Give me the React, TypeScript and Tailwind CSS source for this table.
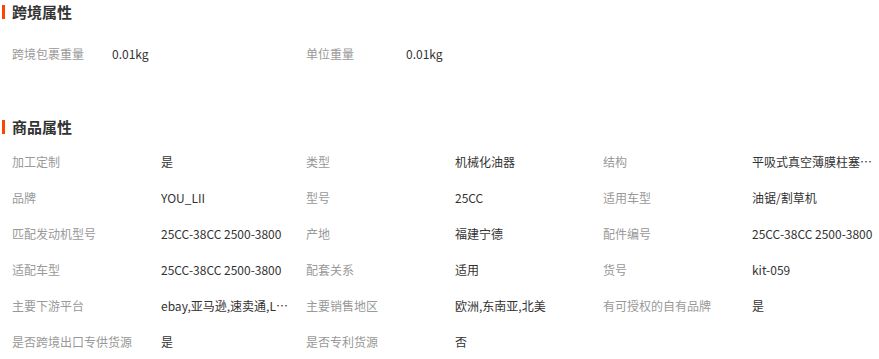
import React from "react";

type Item = { label: string; value: string };

const font = { fontFamily: '"Noto Sans CJK SC", "Noto Sans", sans-serif' };

function Header({ title }: { title: string }) {
  return (
    <div className="flex h-6 items-center">
      <div className="ml-[2px] h-[14px] w-[3px] bg-[#ff4400]" />
      <div className="ml-[7px] text-[15px] font-bold leading-6 text-[#333]">{title}</div>
    </div>
  );
}

function Cell({ item, labelW }: { item?: Item; labelW: string }) {
  if (!item) return <div />;
  return (
    <div className="flex h-9 items-center text-[12px] leading-4">
      <div className={`${labelW} shrink-0 truncate text-[#999]`}>{item.label}</div>
      <div className="w-[128px] truncate text-[#333]">{item.value}</div>
    </div>
  );
}

const cross: Item[] = [
  { label: "跨境包裹重量", value: "0.01kg" },
  { label: "单位重量", value: "0.01kg" },
];

const goods: Item[] = [
  { label: "加工定制", value: "是" },
  { label: "类型", value: "机械化油器" },
  { label: "结构", value: "平吸式真空薄膜柱塞式化油器" },
  { label: "品牌", value: "YOU_LII" },
  { label: "型号", value: "25CC" },
  { label: "适用车型", value: "油锯/割草机" },
  { label: "匹配发动机型号", value: "25CC-38CC 2500-3800" },
  { label: "产地", value: "福建宁德" },
  { label: "配件编号", value: "25CC-38CC 2500-3800" },
  { label: "适配车型", value: "25CC-38CC 2500-3800" },
  { label: "配套关系", value: "适用" },
  { label: "货号", value: "kit-059" },
  { label: "主要下游平台", value: "ebay,亚马逊,速卖通,Lazada,Shopee" },
  { label: "主要销售地区", value: "欧洲,东南亚,北美" },
  { label: "有可授权的自有品牌", value: "是" },
  { label: "是否跨境出口专供货源", value: "是" },
  { label: "是否专利货源", value: "否" },
];

export default function App() {
  return (
    <div className="h-[359px] w-[879px] overflow-hidden bg-white" style={font}>
      <Header title="跨境属性" />
      <div className="mt-[12px] grid grid-cols-[294px_297px_1fr] pl-3">
        {cross.map((it) => (
          <Cell key={it.label} item={it} labelW="w-[100px]" />
        ))}
      </div>
      <div className="mt-[43px]">
        <Header title="商品属性" />
      </div>
      <div className="mt-[5px] grid grid-cols-[294px_297px_1fr] pl-3">
        {goods.map((it) => (
          <Cell key={it.label} item={it} labelW="w-[149px]" />
        ))}
      </div>
    </div>
  );
}
